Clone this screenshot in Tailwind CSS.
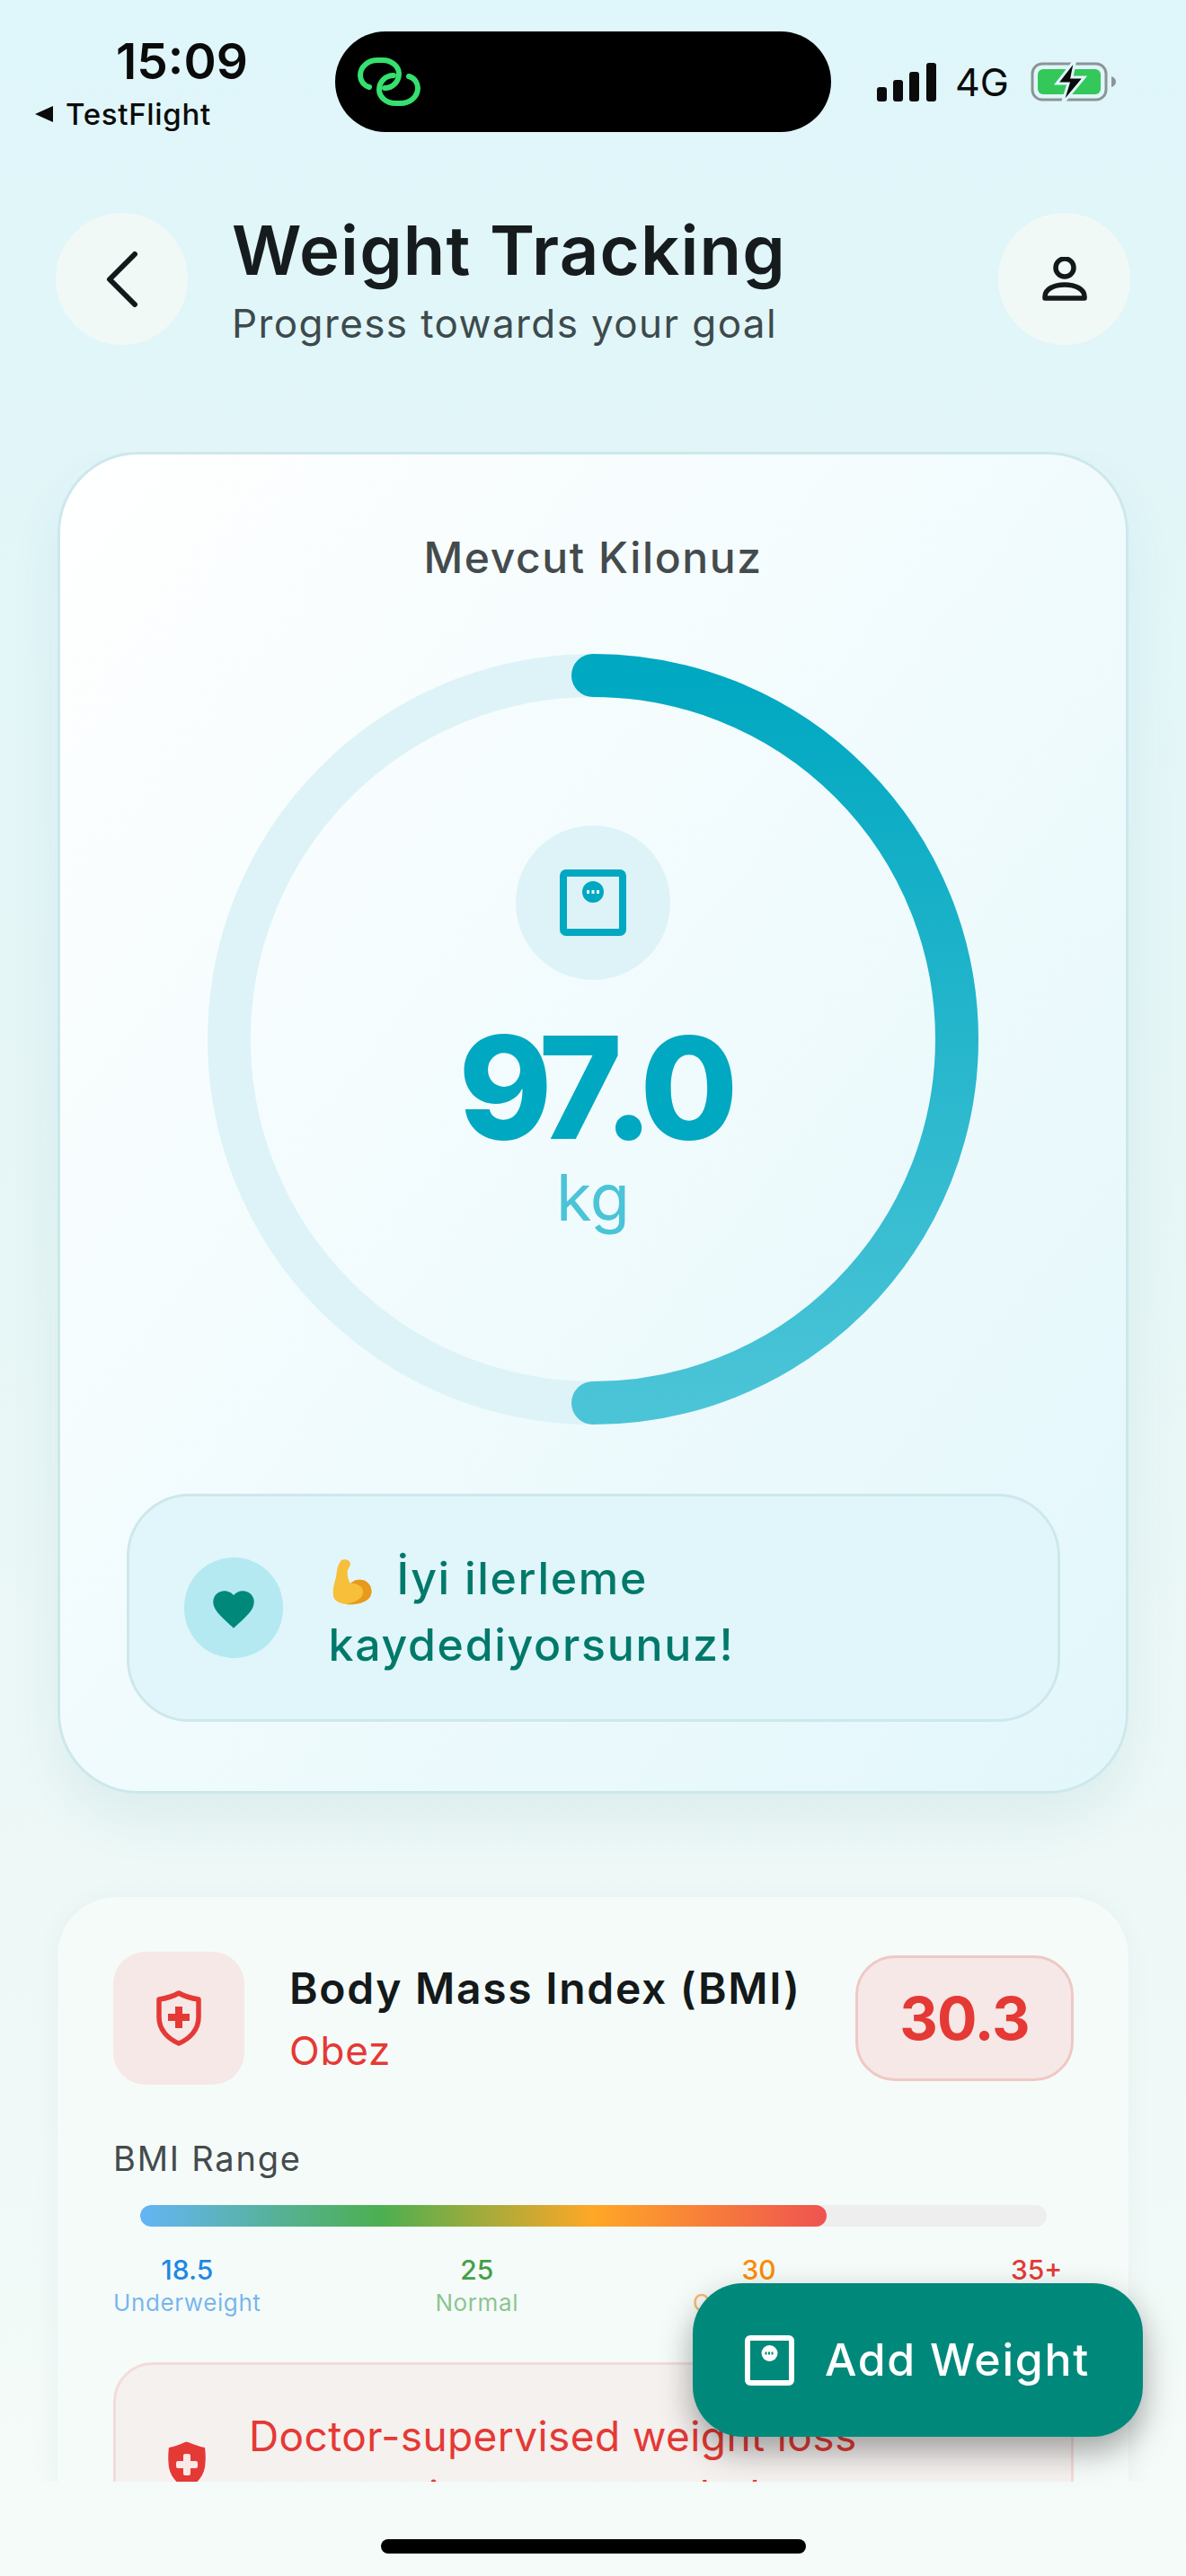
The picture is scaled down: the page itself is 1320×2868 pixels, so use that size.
<!DOCTYPE html>
<html lang="en">
<head>
<meta charset="UTF-8">
<title>Weight Tracking</title>
<script src="https://cdn.jsdelivr.net/npm/@tailwindcss/browser@4"></script>
</head>
<body class="m-0 font-['Inter',sans-serif]">
<div class="relative flex h-[2868px] w-[1320px] flex-col overflow-hidden bg-gradient-to-b from-[#dff6fa] via-[#e7f6f6] to-[#f5fbf9]">

  <!-- status bar -->
  <div class="flex h-[147px] shrink-0 items-start pt-[35px]">
    <div class="w-[373px] shrink-0">
      <div class="mt-[3px] pl-[129px] text-[55px] leading-[60px] font-semibold text-[#0b0b0b]">15:09</div>
      <div class="mt-[11px] flex items-center gap-[13px] pl-[38px] text-[33px] leading-[36px] font-medium tracking-[0.7px] text-[#0b0b0b]">
        <svg class="h-[20px] w-[22px]" viewBox="0 0 22 20"><path d="M1 10 21 1v18z" fill="#0b0b0b"/></svg>
        <span>TestFlight</span>
      </div>
    </div>
    <div class="flex h-[112px] w-[552px] shrink-0 items-center rounded-[56px] bg-black pl-[25px]">
      <svg class="h-[54px] w-[70px]" viewBox="0 0 70 54" fill="none" stroke="#35e06f" stroke-width="6" stroke-linecap="round">
        <path d="M13 33C6 31 3 25 3 20 3 10 12 3 22 3h6c10 0 18 7 18 15 0 9-7 16-16 16"/>
        <path d="M57 21c7 2 10 8 10 13 0 10-9 17-19 17h-6c-10 0-18-7-18-15 0-9 7-16 16-16"/>
      </svg>
    </div>
    <div class="flex h-[112px] items-center pl-[50px]">
      <svg class="h-[44px] w-[68px]" viewBox="0 0 68 44" fill="#0b0b0b">
        <rect x="1" y="28" width="11" height="16" rx="3"/>
        <rect x="19" y="20" width="11" height="24" rx="3"/>
        <rect x="37" y="11" width="11" height="33" rx="3"/>
        <rect x="56" y="1" width="11" height="43" rx="3"/>
      </svg>
      <span class="ml-[20px] text-[43px] font-normal text-[#0b0b0b]">4G</span>
      <svg class="ml-[24px] h-[50px] w-[96px]" viewBox="0 0 96 50" fill="none">
        <rect x="2" y="5" width="82" height="40" rx="11" stroke="#8c9496" stroke-width="3"/>
        <rect x="8" y="11" width="70" height="28" rx="6" fill="#34c759"/>
        <path d="M90 19c3 1 5 3 5 6s-2 5-5 6z" fill="#8c9496"/>
        <path d="M50 0 29 27h13l-7 23 25-30H46z" fill="#0b0b0b" stroke="#dff6fa" stroke-width="3"/>
      </svg>
    </div>
  </div>

  <!-- header -->
  <header class="mt-[86px] flex shrink-0 items-center px-[62px]">
    <button class="flex h-[147px] w-[147px] shrink-0 items-center justify-center rounded-full bg-[#f1f9f7]">
      <svg class="h-[62px] w-[36px]" viewBox="0 0 36 62" fill="none" stroke="#13191a" stroke-width="6" stroke-linecap="round" stroke-linejoin="round"><path d="M32 3 4 31l28 28"/></svg>
    </button>
    <div class="ml-[49px] flex-1">
      <h1 class="text-[76px] leading-[90px] font-semibold tracking-[1.2px] text-[#161c1d]">Weight Tracking</h1>
      <p class="mt-[9px] text-[44px] leading-[56px] tracking-[1.4px] text-[#3d4a4c]">Progress towards your goal</p>
    </div>
    <button class="flex h-[147px] w-[147px] shrink-0 items-center justify-center rounded-full bg-[#f1f9f7]">
      <svg class="h-[50px] w-[50px]" viewBox="0 0 50 50" fill="none" stroke="#13191a" stroke-width="5.500" stroke-linejoin="round"><circle cx="25" cy="12" r="10"/><path d="M3 46v-2c0-8 10-13 22-13s22 5 22 13v2z"/></svg>
    </button>
  </header>

  <!-- scroll area -->
  <main class="mt-[115px] h-[2260px] shrink-0 overflow-hidden px-[64px]">
    <section class="flex h-[1494px] flex-col items-center rounded-[90px] border-[3px] border-[#cde8ec] bg-gradient-to-br from-white to-[#e2f7fb] px-[73px] shadow-[0_30px_60px_rgba(0,105,110,0.07)]">
      <h2 class="mt-[85px] text-[48px] leading-[60px] font-medium tracking-[1.6px] text-[#444b4d]">Mevcut Kilonuz</h2>
      <div class="relative mt-[76px] h-[860px] w-[860px] shrink-0">
        <svg class="h-full w-full" viewBox="0 0 860 860" fill="none">
          <defs><linearGradient id="ringGrad" x1="0" y1="0" x2="0" y2="1"><stop offset="0" stop-color="#00a8c1"/><stop offset="1" stop-color="#4bc4d7"/></linearGradient></defs>
          <circle cx="430" cy="430" r="405" stroke="#def3f7" stroke-width="48"/>
          <path d="M430 25a405 405 0 0 1 0 810" stroke="url(#ringGrad)" stroke-width="48" stroke-linecap="round"/>
        </svg>
        <div class="absolute inset-0 flex flex-col items-center">
          <div class="mt-[192px] flex h-[172px] w-[172px] items-center justify-center rounded-full bg-[#def3f7]">
            <svg class="h-[74px] w-[74px]" viewBox="0 0 74 74" fill="none"><rect x="4" y="4" width="66" height="66" rx="3" stroke="#00a8c1" stroke-width="8"/><circle cx="37" cy="25" r="12" fill="#00a8c1"/><path d="M30 25h3m2.500 0h3m2.500 0h3" stroke="#e6f7fa" stroke-width="4"/></svg>
          </div>
          <div class="mt-[55px] text-[158px] leading-[130px] font-extrabold tracking-[-12px] text-[#00a8c1]">97<span class="mr-[-3px] ml-[-9px]">.</span>0</div>
          <div class="mt-[14px] text-[72px] leading-[86px] font-normal text-[#4bc4d7]">kg</div>
        </div>
      </div>
      <div class="mt-[76px] flex h-[254px] w-[1039px] shrink-0 items-center rounded-[70px] border-[3px] border-[#cde8ec] bg-[#e0f6fa] pl-[61px]">
        <div class="flex h-[112px] w-[110px] shrink-0 items-center justify-center rounded-full bg-[#b5e9f1]">
          <svg class="h-[48px] w-[52px]" viewBox="0 0 24 22" fill="#00897b"><path d="M12 21.500 10.400 20C5 15.100 1.500 11.900 1.500 8 1.500 4.800 4 2.300 7.200 2.300c1.800 0 3.600.8 4.800 2.200 1.200-1.400 3-2.200 4.800-2.200 3.200 0 5.700 2.500 5.700 5.700 0 3.900-3.500 7.100-8.900 12z"/></svg>
        </div>
        <p class="mt-[8px] ml-[51px] w-[520px] text-[50px] leading-[74px] font-medium tracking-[1.7px] text-[#00796b]">
          <svg class="mr-[26px] inline-block h-[54px] w-[50px] align-[-14px]" viewBox="0 0 50 54"><path d="M14 2c5-2 10 0 10 5l-3 6c-1 5 0 10 3 15 5-5 14-6 19-1 5 4 6 12 2 17-5 6-16 8-26 7-8-1-13-4-14-9-1-8 1-14 3-21 1-6 1-13 6-19z" fill="#f7bf3a"/><path d="M24 28c5-5 14-6 19-1 5 4 6 12 2 17-5 6-16 8-26 7 10-2 20-6 19-15-1-6-9-9-14-8z" fill="#e79a1c"/></svg>İyi ilerleme kaydediyorsunuz!</p>
      </div>
    </section>

    <section class="mt-[115px] rounded-[66px] bg-[#f5fbf9] pt-[61px] pr-[61px] pb-[60px] pl-[62px] shadow-[0_4px_30px_rgba(0,80,80,0.05)]">
      <div class="flex items-center">
        <div class="flex h-[148px] w-[146px] shrink-0 items-center justify-center rounded-[36px] bg-[#f5e8e6]">
          <svg class="h-[62px] w-[50px]" viewBox="0 0 50 62" fill="none"><path d="M25 3C18 7 10 9 3 10v20c0 14 10 24 22 29 12-5 22-15 22-29V10C40 9 32 7 25 3z" stroke="#e53935" stroke-width="5.500" stroke-linejoin="round"/><path d="M21 18h8v8h8v8h-8v8h-8v-8h-8v-8h8z" fill="#e53935"/></svg>
        </div>
        <div class="ml-[50px] flex-1">
          <h3 class="text-[48px] leading-[60px] font-semibold tracking-[1.7px] text-[#14191a]">Body Mass Index (BMI)</h3>
          <p class="mt-[12px] text-[44px] leading-[54px] tracking-[0.8px] text-[#e53935]">Obez</p>
        </div>
        <div class="flex h-[140px] w-[243px] shrink-0 items-center justify-center rounded-[44px] border-[3px] border-[#efc8c5] bg-[#f5e8e6] text-[66px] font-bold tracking-[-1px] text-[#e53935]">30.3</div>
      </div>
      <p class="mt-[60px] text-[38px] leading-[44px] tracking-[1.8px] text-[#444b4d]">BMI Range</p>
      <div class="mx-[30px] mt-[30px] h-[24px] overflow-hidden rounded-full bg-[#eeeeee]">
        <div class="h-full w-[75.7%] rounded-full bg-[linear-gradient(to_right,#64b5f6,#4caf50_35%,#ffa726_66%,#ef5350)]"></div>
      </div>
      <div class="mt-[29px] flex justify-between">
        <div class="flex flex-col items-center"><span class="text-[30px] leading-[38px] font-medium text-[#1e88e5]">18.5</span><span class="text-[26px] leading-[36px] tracking-[0.6px] text-[#1e88e5]/60">Underweight</span></div>
        <div class="flex flex-col items-center"><span class="text-[30px] leading-[38px] font-medium text-[#43a047]">25</span><span class="text-[26px] leading-[36px] tracking-[0.6px] text-[#43a047]/60">Normal</span></div>
        <div class="flex flex-col items-center"><span class="text-[30px] leading-[38px] font-medium text-[#fb8c00]">30</span><span class="text-[26px] leading-[36px] tracking-[0.6px] text-[#fb8c00]/60">Overweight</span></div>
        <div class="flex flex-col items-center"><span class="text-[30px] leading-[38px] font-medium text-[#e53935]">35+</span><span class="text-[26px] leading-[36px] tracking-[0.6px] text-[#e53935]/60">Obese</span></div>
      </div>
      <div class="mt-[48px] flex items-center rounded-[44px] border-[3px] border-[#f3dcd9] bg-[#f4f1ef] py-[46px] pr-[40px] pl-[58px]">
        <svg class="h-[54px] w-[42px] shrink-0" viewBox="0 0 42 54" fill="#e53935"><path d="M21 0C15 3 7 6 1 7c-1 8-1 14 0 22 2 11 10 19 20 25 10-6 18-14 20-25 1-8 1-14 0-22-6-1-14-4-21-7z"/><path d="M17 16q0-2 2-2h4q2 0 2 2v6h6q2 0 2 2v4q0 2-2 2h-6v6q0 2-2 2h-4q-2 0-2-2v-6h-6q-2 0-2-2v-4q0-2 2-2h6z" fill="#fbe9e7"/></svg>
        <p class="ml-[48px] w-[760px] text-[46px] leading-[66px] tracking-[0.4px] text-[#e53935]">Doctor-supervised weight loss program is recommended</p>
      </div>
    </section>
  </main>

  <!-- home bar -->
  <div class="flex flex-1 items-end justify-center pb-[25px]">
    <div class="h-[16px] w-[473px] rounded-full bg-black"></div>
  </div>

  <!-- add weight button -->
  <button class="absolute top-[2542px] left-[771px] flex h-[171px] w-[501px] items-center rounded-[56px] bg-[#00897b] pl-[58px] shadow-[0_16px_36px_rgba(0,0,0,0.35)]">
    <svg class="h-[56px] w-[55px]" viewBox="0 0 55 56" fill="none"><rect x="3" y="3" width="49" height="50" rx="3" stroke="#fff" stroke-width="6"/><circle cx="27.500" cy="20" r="9" fill="#fff"/><path d="M22.500 20h2m1.500 0h2m1.500 0h2" stroke="#00897b" stroke-width="3"/></svg>
    <span class="ml-[34px] text-[50px] font-medium tracking-[1.7px] text-white">Add Weight</span>
  </button>
</div>
</body>
</html>
